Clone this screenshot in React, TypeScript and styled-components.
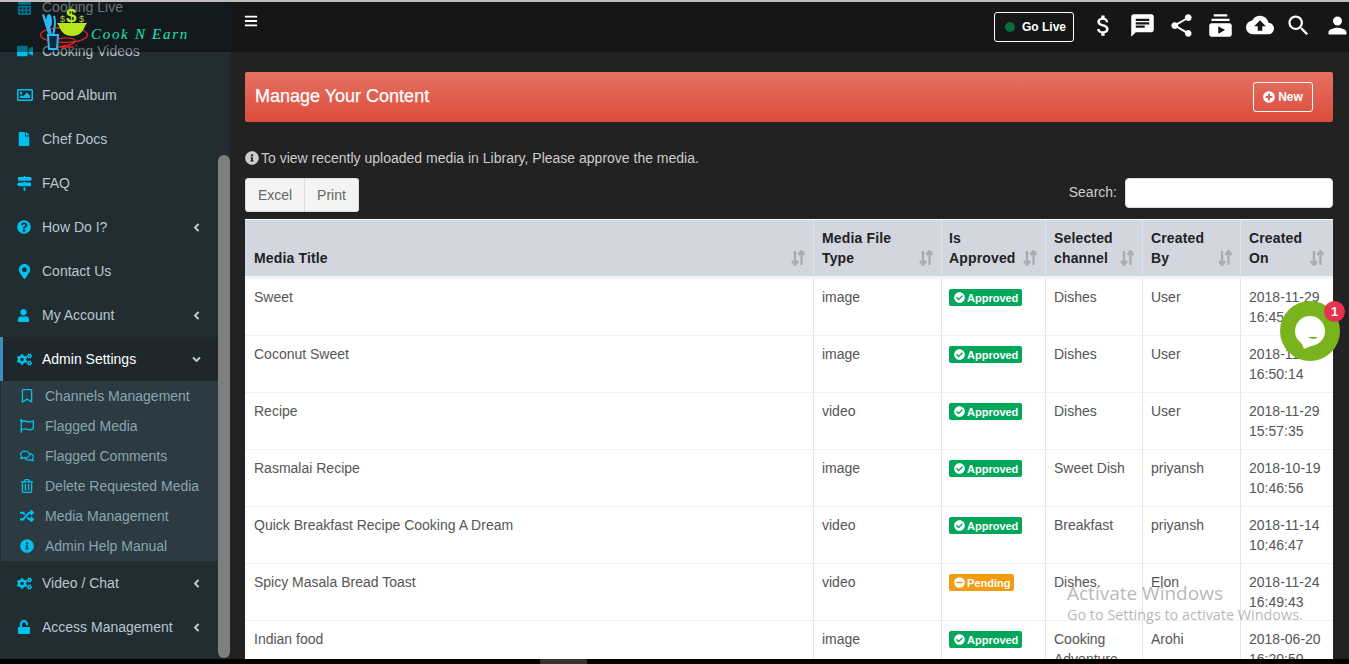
import styled, { createGlobalStyle } from 'styled-components';
import {
	FaAngleDown, FaAngleLeft, FaBars, FaCalendarAlt, FaCheckCircle, FaCogs, FaFile, FaInfoCircle,
	FaMapMarkerAlt, FaMapSigns, FaMinusCircle, FaPlusCircle,
	FaQuestionCircle, FaRandom, FaRegBookmark, FaRegComments, FaRegFlag, FaRegImage, FaRegTrashAlt,
	FaUnlock, FaUser, FaVideo,
} from 'react-icons/fa';
import { MdAttachMoney, MdChat, MdCloudUpload, MdPerson, MdSearch, MdShare, MdSubscriptions } from 'react-icons/md';
import type { ReactNode } from 'react';

const GlobalStyle = createGlobalStyle`
	html, body {
		margin: 0;
		padding: 0;
		background: #000;
		overflow: hidden;
	}
	* {
		box-sizing: border-box;
	}
`
const Page = styled.div`
	position: relative;
	width: 1349px;
	height: 664px;
	overflow: hidden;
	display: flex;
	flex-direction: column;
	background: #000;
	font-family: "Liberation Sans", Arial, sans-serif;
	font-size: 14px;
`
const TopLine = styled.div`
	height: 2px;
	flex: none;
	background: #bdbdbd;
`
const Body = styled.div`
	flex: none;
	height: 657px;
	display: flex;
	overflow: hidden;
`
const BottomBar = styled.div`
	flex: 1;
	background: #000;
`
const Sidebar = styled.aside`
	position: relative;
	flex: none;
	width: 230px;
	height: 100%;
	overflow: hidden;
	background: #222d32;
`
const Menu = styled.ul`
	list-style: none;
	margin: -17px 0 0;
	padding: 0;
`
const MenuItem = styled.li<{ $active?: boolean }>`
	height: 44px;
	display: flex;
	align-items: center;
	padding-left: ${({ $active }) => ($active ? '14px' : '17px')};
	padding-right: 27px;
	border-left: ${({ $active }) => ($active ? '3px solid #3c8dbc' : 'none')};
	background: ${({ $active }) => ($active ? '#1e282c' : 'transparent')};
	color: ${({ $active }) => ($active ? '#fff' : '#b8c7ce')};
`
const MenuIcon = styled.span<{ $size?: number }>`
	flex: none;
	width: 25px;
	display: flex;
	align-items: center;
	color: #00c0ef;
	font-size: ${({ $size }) => $size ?? 15}px;
`
const MenuLabel = styled.span`
	flex: 1;
`
const Arrow = styled.span`
	display: flex;
	color: #b8c7ce;
	font-size: 13px;
`
const SubMenu = styled.ul`
	list-style: none;
	margin: 0 12px 0 1px;
	padding: 0;
	background: #2c3b41;
`
const SubItem = styled.li`
	height: 30px;
	display: flex;
	align-items: center;
	padding-left: 19px;
	color: #8aa4af;
`
const SubIcon = styled.span`
	flex: none;
	width: 25px;
	display: flex;
	align-items: center;
	color: #00c0ef;
	font-size: 14px;
`
const SideScrollThumb = styled.div`
	position: absolute;
	top: 153px;
	right: 0;
	width: 12px;
	height: 503px;
	border-radius: 6px;
	background: #7f7f7f;
`
const LogoBar = styled.div`
	position: absolute;
	top: 0;
	left: 0;
	width: 230px;
	height: 50px;
	padding-left: 38px;
	display: flex;
	align-items: flex-start;
	background: rgba(0, 0, 0, 0.42);
`
const LogoText = styled.span`
	margin: 24px 0 0 -1px;
	color: #1fe0b8;
	font-family: "Liberation Serif", serif;
	font-style: italic;
	font-size: 15px;
	letter-spacing: 1.7px;
	white-space: nowrap;
`
const Main = styled.main`
	flex: 1;
	min-width: 0;
	background: #222;
`
const Topbar = styled.header`
	height: 50px;
	display: flex;
	align-items: center;
	justify-content: space-between;
	padding-left: 14px;
	background: #161616;
	color: #fff;
`
const Hamburger = styled.span`
	display: flex;
	margin-top: -12px;
	font-size: 14px;
`
const TopActions = styled.div`
	display: flex;
	align-items: center;
	margin-right: -8px;
`
const GoLive = styled.button`
	width: 80px;
	height: 30px;
	margin-right: 10px;
	padding: 0 0 0 10px;
	display: flex;
	align-items: center;
	gap: 7px;
	background: transparent;
	border: 1px solid #fff;
	border-radius: 3px;
	color: #fff;
	font: bold 12px "Liberation Sans", Arial, sans-serif;
`
const LiveDot = styled.span`
	width: 10px;
	height: 10px;
	border-radius: 50%;
	background: #0b6b3d;
`
const TopIcon = styled.span<{ $size?: number }>`
	width: 39px;
	height: 30px;
	margin-bottom: 4px;
	display: flex;
	align-items: center;
	justify-content: center;
	font-size: ${({ $size }) => $size ?? 27}px;
`
const Content = styled.div`
	padding: 20px 16px 0 15px;
`
const Banner = styled.div`
	height: 50px;
	display: flex;
	align-items: center;
	justify-content: space-between;
	padding: 0 20px 0 10px;
	border-radius: 2px;
	background: linear-gradient(to bottom, #e57163, #dc4c3a);
	color: #fff;
	font-size: 18px;
`
const BannerTitle = styled.span`
	margin-top: -2px;
	-webkit-text-stroke: 0.25px #fff;
`
const NewButton = styled.button`
	width: 60px;
	height: 30px;
	display: flex;
	align-items: center;
	justify-content: center;
	gap: 3px;
	background: transparent;
	border: 1px solid #fff;
	border-radius: 3px;
	color: #fff;
	font: bold 12px "Liberation Sans", Arial, sans-serif;
`
const Notice = styled.p`
	margin: 26px 0 0;
	display: flex;
	align-items: center;
	gap: 2px;
	line-height: 20px;
	color: #ccc;
`
const Toolbar = styled.div`
	margin: 10px 0 7px;
	display: flex;
	justify-content: space-between;
	align-items: flex-start;
`
const ButtonGroup = styled.div`
	display: flex;
`
const ExportButton = styled.button<{ $first?: boolean }>`
	height: 34px;
	padding: 0;
	width: ${({ $first }) => ($first ? '60px' : '54px')};
	background: #f4f4f4;
	border: 1px solid #ddd;
	border-left-width: ${({ $first }) => ($first ? '1px' : '0')};
	border-radius: ${({ $first }) => ($first ? '3px 0 0 3px' : '0 3px 3px 0')};
	color: #666;
	font: 14px "Liberation Sans", Arial, sans-serif;
`
const SearchBox = styled.label`
	display: flex;
	align-items: center;
	gap: 8px;
	color: #ccc;
`
const SearchLabel = styled.span`
	margin-top: -2px;
`
const SearchInput = styled.input`
	width: 208px;
	height: 30px;
	border: 1px solid #ddd;
	border-radius: 4px;
	background: #fff;
`
const Table = styled.table`
	width: 1088px;
	table-layout: fixed;
	border-collapse: separate;
	border-spacing: 0;
	border-top: 1px solid #fff;
	background: #fff;
	color: #555;
`
const Th = styled.th`
	height: 59px;
	padding: 8px 8px;
	vertical-align: bottom;
	text-align: left;
	background: #d2d6df;
	background-clip: padding-box;
	border-bottom: 3px solid #f4f4f4;
	border-right: 1px solid #e0e3e9;
	color: #222;
	font-size: 14px;
	font-weight: bold;
	letter-spacing: 0.15px;
	line-height: 20px;
	&:first-child {
		padding-left: 9px;
	}
	&:nth-child(3) {
		padding-left: 7px;
	}
	&:last-child {
		padding-right: 9px;
		border-right: none;
	}
`
const ThInner = styled.div`
	display: flex;
	justify-content: space-between;
	align-items: flex-end;
	gap: 6px;
`
const SortSvg = styled.svg`
	flex: none;
	margin-bottom: 2px;
`
const Td = styled.td`
	height: 57px;
	padding: 8px;
	vertical-align: top;
	line-height: 20px;
	border-bottom: 1px solid #f0f0f0;
	border-right: 1px solid #e4e4e4;
	overflow: hidden;
	&:first-child {
		padding-left: 9px;
	}
	&:last-child {
		border-right: none;
	}
`
const Badge = styled.span<{ $pending?: boolean }>`
	display: inline-flex;
	align-items: center;
	gap: 2px;
	height: 17px;
	padding: 0 4px 0 5px;
	margin: 2px 0 0 -1px;
	vertical-align: top;
	border-radius: 2px;
	background: ${({ $pending }) => ($pending ? '#f39c12' : '#00a65a')};
	color: #fff;
	font-size: 11px;
	font-weight: bold;
`
const Watermark = styled.div`
	position: absolute;
	left: 1067px;
	top: 580px;
	color: rgba(110, 110, 110, 0.5);
	font-family: "Open Sans", sans-serif;
	white-space: nowrap;
	pointer-events: none;
`
const WatermarkTitle = styled.div`
	font-size: 19px;
	line-height: 26px;
`
const WatermarkSub = styled.div`
	font-size: 14.4px;
	line-height: 20px;
	margin-top: -1px;
`
const ChatBubble = styled.div`
	position: absolute;
	left: 1280px;
	top: 301px;
	width: 60px;
	height: 60px;
	padding: 15px;
	border-radius: 50%;
	background: #79b31d;
`
const ChatCount = styled.span`
	position: absolute;
	top: 0;
	right: -5px;
	width: 21px;
	height: 21px;
	display: flex;
	align-items: center;
	justify-content: center;
	border-radius: 50%;
	background: #e8304f;
	color: #fff;
	font-size: 13px;
	font-weight: bold;
`
const HorizontalThumb = styled.div`
	position: absolute;
	left: 540px;
	bottom: 0;
	width: 47px;
	height: 5px;
	background: #333;
`

const Logo = () => (
	<svg width="54" height="48" viewBox="0 0 54 48">
		<ellipse cx="26" cy="33" rx="23.5" ry="7.5" fill="none" stroke="#d8232a" strokeWidth="1.4" />
		<path d="M20 37 C28 35 37 36 37 39 C37 43 28 43 20 45 H36" fill="none" stroke="#d8232a" strokeWidth="1.3" />
		<path d="M4 13 L6 12 L13 31 L10 32 Z" fill="#29b6f6" />
		<ellipse cx="11" cy="19" rx="3" ry="7" fill="#29b6f6" />
		<path d="M11 25 L13 33 M16 14 C18 20 17 26 15 33" stroke="#29b6f6" strokeWidth="2" fill="none" />
		<path d="M10 33 H20 L19 47 H11 Z" fill="#0d2a36" stroke="#29b6f6" strokeWidth="2" />
		<path d="M19 21 H49 L47 24 C45 30 41 34 34 34 C27 34 23 30 21 24 Z" fill="#b7e61c" />
		<text x="28" y="20" fontFamily="Liberation Sans" fontWeight="bold" fontSize="19" fill="#b7e61c">$</text>
		<text x="22" y="20" fontFamily="Liberation Sans" fontSize="9" fill="#b7c850">$</text>
		<text x="41" y="20" fontFamily="Liberation Sans" fontSize="9" fill="#b7c850">$</text>
	</svg>
)

const ChatGlyph = () => (
	<svg width="30" height="34" viewBox="0 0 30 34">
		<circle cx="15" cy="15" r="15" fill="#fff" />
		<path d="M6 26 L9 33 L19 29 Z" fill="#fff" />
		<path d="M13 21 H23 Q18 25 13 21 Z" fill="#79b31d" />
	</svg>
)

const Sort = () => (
	<SortSvg width="14" height="16" viewBox="0 0 14 16">
		<path d="M4 1 V14 M1 11 L4 15 L7 11" fill="none" stroke="#a9aeb6" strokeWidth="2.4" />
		<path d="M10.5 15 V2 M7.5 5 L10.5 1 L13.5 5" fill="none" stroke="#a9aeb6" strokeWidth="2.4" />
	</SortSvg>
)

type TRow = {
	title: string;
	type: string;
	pending?: boolean;
	channel: ReactNode;
	by: string;
	date: string;
	time: string;
}

const menuTop: { icon: ReactNode; label: string; arrow?: boolean; size?: number }[] = [
	{ icon: <FaCalendarAlt />, label: 'Cooking Live' },
	{ icon: <FaVideo />, label: 'Cooking Videos', size: 16 },
	{ icon: <FaRegImage />, label: 'Food Album', size: 16 },
	{ icon: <FaFile />, label: 'Chef Docs', size: 14 },
	{ icon: <FaMapSigns />, label: 'FAQ' },
	{ icon: <FaQuestionCircle />, label: 'How Do I?', arrow: true, size: 14 },
	{ icon: <FaMapMarkerAlt />, label: 'Contact Us' },
	{ icon: <FaUser />, label: 'My Account', arrow: true, size: 13 },
];

const subMenu: { icon: ReactNode; label: string }[] = [
	{ icon: <FaRegBookmark />, label: 'Channels Management' },
	{ icon: <FaRegFlag />, label: 'Flagged Media' },
	{ icon: <FaRegComments />, label: 'Flagged Comments' },
	{ icon: <FaRegTrashAlt />, label: 'Delete Requested Media' },
	{ icon: <FaRandom />, label: 'Media Management' },
	{ icon: <FaInfoCircle />, label: 'Admin Help Manual' },
];

const rows: TRow[] = [
	{ title: 'Sweet', type: 'image', channel: 'Dishes', by: 'User', date: '2018-11-29', time: '16:45:12' },
	{ title: 'Coconut Sweet', type: 'image', channel: 'Dishes', by: 'User', date: '2018-11-29', time: '16:50:14' },
	{ title: 'Recipe', type: 'video', channel: 'Dishes', by: 'User', date: '2018-11-29', time: '15:57:35' },
	{ title: 'Rasmalai Recipe', type: 'image', channel: 'Sweet Dish', by: 'priyansh', date: '2018-10-19', time: '10:46:56' },
	{ title: 'Quick Breakfast Recipe Cooking A Dream', type: 'video', channel: 'Breakfast', by: 'priyansh', date: '2018-11-14', time: '10:46:47' },
	{ title: 'Spicy Masala Bread Toast', type: 'video', pending: true, channel: 'Dishes.', by: 'Elon', date: '2018-11-24', time: '16:49:43' },
	{ title: 'Indian food', type: 'image', channel: 'Cooking Adventure', by: 'Arohi', date: '2018-06-20', time: '16:20:50' },
];

const columns: { title: string; width: number }[] = [
	{ title: 'Media Title', width: 569 },
	{ title: 'Media File Type', width: 128 },
	{ title: 'Is Approved', width: 104 },
	{ title: 'Selected channel', width: 97 },
	{ title: 'Created By', width: 98 },
	{ title: 'Created On', width: 92 },
];

const App = () => {
	return (
		<Page>
			<GlobalStyle />
			<TopLine />
			<Body>
				<Sidebar>
					<Menu>
						{menuTop.map((item) => (
							<MenuItem key={item.label}>
								<MenuIcon $size={item.size}>{item.icon}</MenuIcon>
								<MenuLabel>{item.label}</MenuLabel>
								{item.arrow && <Arrow><FaAngleLeft /></Arrow>}
							</MenuItem>
						))}
						<MenuItem $active>
							<MenuIcon><FaCogs /></MenuIcon>
							<MenuLabel>Admin Settings</MenuLabel>
							<Arrow><FaAngleDown /></Arrow>
						</MenuItem>
						<SubMenu>
							{subMenu.map((item) => (
								<SubItem key={item.label}>
									<SubIcon>{item.icon}</SubIcon>
									{item.label}
								</SubItem>
							))}
						</SubMenu>
						<MenuItem>
							<MenuIcon><FaCogs /></MenuIcon>
							<MenuLabel>Video / Chat</MenuLabel>
							<Arrow><FaAngleLeft /></Arrow>
						</MenuItem>
						<MenuItem>
							<MenuIcon $size={14}><FaUnlock /></MenuIcon>
							<MenuLabel>Access Management</MenuLabel>
							<Arrow><FaAngleLeft /></Arrow>
						</MenuItem>
					</Menu>
					<SideScrollThumb />
					<LogoBar>
						<Logo />
						<LogoText>Cook N Earn</LogoText>
					</LogoBar>
				</Sidebar>
				<Main>
					<Topbar>
						<Hamburger><FaBars /></Hamburger>
						<TopActions>
							<GoLive><LiveDot />Go Live</GoLive>
							<TopIcon><MdAttachMoney /></TopIcon>
							<TopIcon><MdChat /></TopIcon>
							<TopIcon><MdShare /></TopIcon>
							<TopIcon><MdSubscriptions /></TopIcon>
							<TopIcon $size={28}><MdCloudUpload /></TopIcon>
							<TopIcon><MdSearch /></TopIcon>
							<TopIcon><MdPerson /></TopIcon>
						</TopActions>
					</Topbar>
					<Content>
						<Banner>
							<BannerTitle>Manage Your Content</BannerTitle>
							<NewButton><FaPlusCircle />New</NewButton>
						</Banner>
						<Notice><FaInfoCircle />To view recently uploaded media in Library, Please approve the media.</Notice>
						<Toolbar>
							<ButtonGroup>
								<ExportButton $first>Excel</ExportButton>
								<ExportButton>Print</ExportButton>
							</ButtonGroup>
							<SearchBox><SearchLabel>Search:</SearchLabel><SearchInput /></SearchBox>
						</Toolbar>
						<Table>
							<colgroup>
								{columns.map((col) => <col key={col.title} width={col.width} />)}
							</colgroup>
							<thead>
								<tr>
									{columns.map((col) => (
										<Th key={col.title}>
											<ThInner>
												<span>{col.title}</span>
												<Sort />
											</ThInner>
										</Th>
									))}
								</tr>
							</thead>
							<tbody>
								{rows.map((row) => (
									<tr key={row.title}>
										<Td>{row.title}</Td>
										<Td>{row.type}</Td>
										<Td>
											{row.pending
												? <Badge $pending><FaMinusCircle />Pending</Badge>
												: <Badge><FaCheckCircle />Approved</Badge>}
										</Td>
										<Td>{row.channel}</Td>
										<Td>{row.by}</Td>
										<Td>{row.date}<br />{row.time}</Td>
									</tr>
								))}
							</tbody>
						</Table>
					</Content>
				</Main>
			</Body>
			<BottomBar />
			<HorizontalThumb />
			<Watermark>
				<WatermarkTitle>Activate Windows</WatermarkTitle>
				<WatermarkSub>Go to Settings to activate Windows.</WatermarkSub>
			</Watermark>
			<ChatBubble>
				<ChatGlyph />
				<ChatCount>1</ChatCount>
			</ChatBubble>
		</Page>
	);
}

export default App;
